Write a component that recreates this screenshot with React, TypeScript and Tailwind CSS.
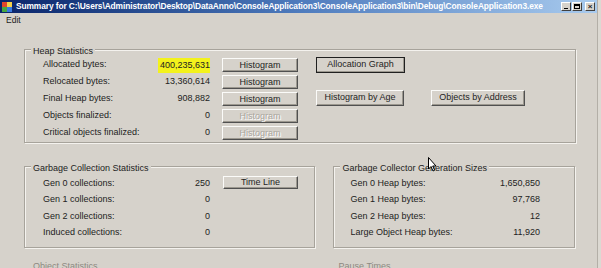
import React from 'react';

const btnBase =
  'flex items-center justify-center bg-[#d6d2cb] border border-t-[#fbfbf9] border-l-[#fbfbf9] border-r-[#505050] border-b-[#505050] shadow-[inset_-1px_-1px_0_#9c988f] text-[9px] leading-none';

function Btn({ label, className, disabled }: { label: string; className: string; disabled?: boolean }) {
  return (
    <div
      className={`${btnBase} ${className} ${
        disabled ? 'text-[#aaa69e] [text-shadow:1px_1px_0_#fff]' : 'text-[#1e1e1e]'
      }`}
    >
      {label}
    </div>
  );
}

function Group({ title, className, children }: { title: string; className: string; children?: React.ReactNode }) {
  return (
    <fieldset
      className={`border border-[#a7a39b] shadow-[inset_1px_1px_0_#f4f2ee,1px_1px_0_#f4f2ee] ${className}`}
    >
      <legend className="ml-[6px] px-[2px] bg-[#d6d2cb] text-[9px] leading-[12px] text-[#222]">
        <span className="relative top-[1.5px]">{title}</span>
      </legend>
      {children}
    </fieldset>
  );
}

const heapRows = [
  { label: 'Allocated bytes:', value: '400,235,631', hl: true },
  { label: 'Relocated bytes:', value: '13,360,614' },
  { label: 'Final Heap bytes:', value: '908,882' },
  { label: 'Objects finalized:', value: '0', off: true },
  { label: 'Critical objects finalized:', value: '0', off: true },
];

const gcRows = [
  { label: 'Gen 0 collections:', value: '250' },
  { label: 'Gen 1 collections:', value: '0' },
  { label: 'Gen 2 collections:', value: '0' },
  { label: 'Induced collections:', value: '0' },
];

const genRows = [
  { label: 'Gen 0 Heap bytes:', value: '1,650,850' },
  { label: 'Gen 1 Heap bytes:', value: '97,768' },
  { label: 'Gen 2 Heap bytes:', value: '12' },
  { label: 'Large Object Heap bytes:', value: '11,920' },
];

export default function App() {
  return (
    <div className="relative w-[601px] h-[268px] overflow-hidden flex bg-[#dcd9d2] font-['Liberation_Sans',Arial,sans-serif] text-[#222]">
      <div className="w-[598px] h-full bg-[#d6d2cb] border-r border-[#b3afa7] flex flex-col">
        {/* title bar */}
        <div className="h-[13px] shrink-0 flex items-center bg-linear-to-r from-[#0a246a] via-[#4e7bbd] to-[#a9cbee] pl-[2px] pr-[2px]">
          <svg width="10" height="10" viewBox="0 0 10 10" className="shrink-0">
            <rect x="0" y="0" width="10" height="10" fill="#f3d24a" />
            <rect x="0" y="0" width="5" height="5" fill="#e2462b" />
            <rect x="5" y="5" width="5" height="5" fill="#3a7be0" />
            <rect x="0" y="5" width="5" height="5" fill="#48a840" />
          </svg>
          <div className="ml-[4px] text-[8.4px] font-bold text-white whitespace-nowrap leading-none tracking-[-0.1px]">
            Summary for C:\Users\Administrator\Desktop\DataAnno\ConsoleApplication3\ConsoleApplication3\bin\Debug\ConsoleApplication3.exe
          </div>
          <div className="ml-auto flex gap-[1px]">
            <div className="w-[10px] h-[9px] bg-[#d6d2cb] border border-t-white border-l-white border-r-[#404040] border-b-[#404040] flex items-end justify-center pb-[1px]">
              <div className="w-[4px] h-[1.5px] bg-black" />
            </div>
            <div className="w-[10px] h-[9px] bg-[#d6d2cb] border border-t-white border-l-white border-r-[#404040] border-b-[#404040] flex items-center justify-center">
              <div className="w-[6px] h-[5px] border border-black border-t-2" />
            </div>
            <div className="ml-[2px] w-[10px] h-[9px] bg-[#d6d2cb] border border-t-white border-l-white border-r-[#404040] border-b-[#404040] flex items-center justify-center text-[8px] font-bold leading-none">
              ×
            </div>
          </div>
        </div>

        {/* menu */}
        <div className="h-[14px] shrink-0 flex items-center pl-[6px] text-[8.5px]">Edit</div>

        <div className="pl-[24px] pr-[22px]">
          {/* Heap statistics */}
          <Group title="Heap Statistics" className="mt-[16px] w-[552px] pb-[0.5px]">
            <div className="flex pt-[1.5px]">
              <div className="flex flex-col pl-[18px]">
                {heapRows.map((r) => (
                  <div key={r.label} className="flex h-[17px] items-center text-[9px]">
                    <div className="w-[115px] whitespace-nowrap">{r.label}</div>
                    <div className="w-[52px] flex justify-end">
                      {r.hl ? <span className="bg-[#f3f21c] pl-[2px] leading-[15px]">{r.value}</span> : r.value}
                    </div>
                    <Btn label="Histogram" className="ml-[12px] w-[76px] h-[14px]" disabled={r.off} />
                  </div>
                ))}
              </div>
              <div className="flex flex-col ml-[18px]">
                <Btn
                  label="Allocation Graph"
                  className="w-[89px] h-[16px] outline outline-1 outline-[#202020] -outline-offset-1"
                />
                <div className="flex mt-[17px]">
                  <Btn label="Histogram by Age" className="w-[88px] h-[16px]" />
                  <Btn label="Objects by Address" className="ml-[27px] w-[94px] h-[16px]" />
                </div>
              </div>
            </div>
          </Group>

          <div className="flex mt-[17px]">
            {/* GC statistics */}
            <Group title="Garbage Collection Statistics" className="w-[292px] pb-[6px]">
              <div className="flex flex-col pt-[3px] pl-[18px]">
                {gcRows.map((r, i) => (
                  <div key={r.label} className="flex h-[16.5px] items-center text-[9px]">
                    <div className="w-[115px] whitespace-nowrap">{r.label}</div>
                    <div className="w-[52px] text-right">{r.value}</div>
                    {i === 0 && <Btn label="Time Line" className="ml-[13px] w-[75px] h-[13px] self-start mt-[1px]" />}
                  </div>
                ))}
              </div>
            </Group>

            {/* Generation sizes */}
            <Group title="Garbage Collector Generation Sizes" className="ml-[18px] w-[242px] pb-[6px]">
              <div className="flex flex-col pt-[3px] pl-[16px] pr-[34px]">
                {genRows.map((r) => (
                  <div key={r.label} className="flex h-[16.5px] items-center justify-between text-[9px]">
                    <div className="whitespace-nowrap">{r.label}</div>
                    <div className="text-right">{r.value}</div>
                  </div>
                ))}
              </div>
            </Group>
          </div>

          <div className="flex mt-[12px] text-[9px] leading-[12px] text-[#8d8981]">
            <div className="ml-[9px]">Object Statistics</div>
            <div className="ml-[241px]">Pause Times</div>
          </div>
        </div>
      </div>

      {/* mouse cursor */}
      <svg className="absolute left-[428px] top-[157px]" width="9" height="15" viewBox="0 0 9 15">
        <path d="M0.5 0.5 L0.5 12 L3 9.5 L5 14 L6.6 13.2 L4.7 9 L8 9 Z" fill="#fff" stroke="#000" strokeWidth="1" />
      </svg>
    </div>
  );
}
